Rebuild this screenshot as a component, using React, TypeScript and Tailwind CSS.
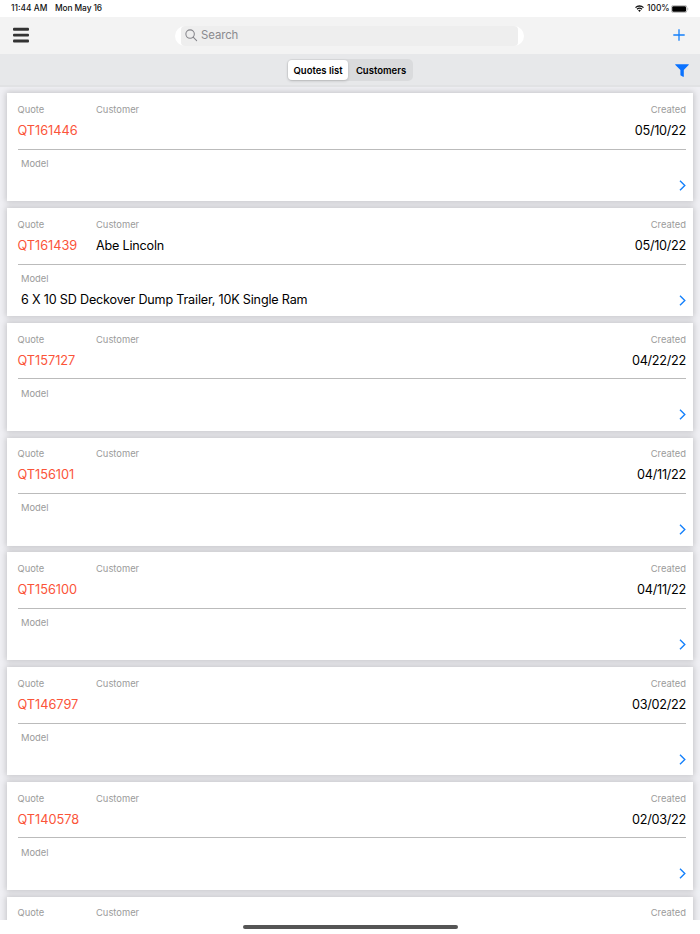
type Quote = {
  id: string;
  created: string;
  customer?: string;
  model?: string;
};

const quotes: Quote[] = [
  { id: "QT161446", created: "05/10/22" },
  { id: "QT161439", created: "05/10/22", customer: "Abe Lincoln", model: "6 X 10 SD Deckover Dump Trailer, 10K Single Ram" },
  { id: "QT157127", created: "04/22/22" },
  { id: "QT156101", created: "04/11/22" },
  { id: "QT156100", created: "04/11/22" },
  { id: "QT146797", created: "03/02/22" },
  { id: "QT140578", created: "02/03/22" },
];

export default function App() {
  return (
    <div className="flex h-[934px] w-[700px] flex-col overflow-hidden bg-white font-['Inter',sans-serif] text-black">
      <StatusBar />
      <NavBar />
      <SegmentBar />
      <main className="flex h-[833px] shrink-0 flex-col gap-[6.75px] overflow-hidden bg-[#efeff3] px-[7px] pt-[6.25px]">
        {quotes.map((q) => <QuoteCard key={q.id} quote={q} />)}
        {/* Next card, only its header row is scrolled into view */}
        <section className="h-[40px] shrink-0 bg-white pr-[7px] pl-[10.5px] shadow-[0_0_6px_1px_rgba(0,0,0,0.18)]">
          <div className="flex pt-[9.75px]">
            <Field className="w-[78.5px]" label="Quote" />
            <Field className="flex-1" label="Customer" />
            <Field className="text-right" label="Created" />
          </div>
        </section>
      </main>
      {/* Home indicator */}
      <div className="flex h-[14px] shrink-0 justify-center pt-[4.5px]">
        <div className="h-[4px] w-[215px] rounded-full bg-[#555]" />
      </div>
    </div>
  );
}

function StatusBar() {
  return (
    <div className="flex h-[17px] shrink-0 items-center justify-between pr-[11px] pl-[11px] text-[8.4px] leading-[17px] font-medium text-[#111]">
      <div className="flex gap-[7.5px]">
        <span className="w-[36.5px] whitespace-nowrap">11:44 AM</span>
        <span className="tracking-[-0.1px] whitespace-nowrap">Mon May 16</span>
      </div>
      <div className="flex items-center gap-[3px]">
        <svg className="h-[7px] w-[9px]" viewBox="0 0 18 14" fill="none" stroke="#111" strokeWidth="2.6">
          <path d="M1 5.2a11.5 11.5 0 0 1 16 0" />
          <path d="M4 8.6a7.2 7.2 0 0 1 10 0" />
          <path d="M6.2 10.7a4 4 0 0 1 5.6 0L9 13.8z" fill="#111" stroke="none" />
        </svg>
        <span className="w-[21px] whitespace-nowrap">100%</span>
        <svg className="h-[8px] w-[18px]" viewBox="0 0 18 8">
          <rect x="0.4" y="0.4" width="15.4" height="7.2" rx="2" fill="#fff" stroke="#aaa" strokeWidth="0.8" />
          <rect x="1.2" y="1.2" width="13.8" height="5.6" rx="1.2" fill="#000" />
          <path d="M16.6 2.7c.9.3.9 2.3 0 2.6z" fill="#999" />
        </svg>
      </div>
    </div>
  );
}

function NavBar() {
  return (
    <header className="flex h-[37px] shrink-0 items-center justify-between bg-[#f3f3f3] pr-[15px] pl-[13px]">
      <button className="w-[162px]">
        <svg className="-mt-[1px] h-[16px] w-[16px]" viewBox="0 0 16 16" fill="#333">
          <rect y="0.8" width="16" height="2.9" rx="1" />
          <rect y="6.7" width="16" height="2.9" rx="1" />
          <rect y="12.6" width="16" height="2.9" rx="1" />
        </svg>
      </button>
      <div className="h-[20px] w-[350px] rounded-[10px] bg-white px-[6px]">
        <div className="flex h-full items-center rounded-[4px] bg-[#eee] pl-[4.5px] text-[11.4px] text-[#8a8a8e]">
          <svg className="mr-[3.5px] size-[12.5px]" viewBox="0 0 13 13" fill="none" stroke="#85858a" strokeWidth="1.1" strokeLinecap="round">
            <circle cx="5.3" cy="5.3" r="4.4" />
            <path d="M8.5 8.5l3.6 3.6" />
          </svg>
          <span className="tracking-[-0.1px]">Search</span>
        </div>
      </div>
      <div className="flex w-[162px] justify-end">
        <svg className="-mt-[1px] size-[12px]" viewBox="0 0 12 12" stroke="#1580fb" strokeWidth="1.3">
          <path d="M6 .3v11.4M.3 6h11.4" />
        </svg>
      </div>
    </header>
  );
}

function SegmentBar() {
  return (
    <div className="flex h-[33px] shrink-0 items-center justify-between border-b-2 border-[#e1e2e4] bg-[#e7e8ea] pr-[11px] pl-[11px]">
      <div className="w-[80px]" />
      <div className="mt-[1px] flex h-[22px] w-[126px] rounded-[5px] bg-[#dadbdd] p-[1px] text-[9.5px] leading-[21px] font-semibold">
        <span className="w-[60px] rounded-[4px] bg-white text-center whitespace-nowrap shadow-[0_1px_3px_rgba(0,0,0,0.18)]">Quotes list</span>
        <span className="w-[64px] pl-[2px] text-center">Customers</span>
      </div>
      <div className="flex w-[80px] justify-end">
        <svg className="mt-[1px] h-[13px] w-[14px]" viewBox="0 0 14 13" fill="#0a72ff">
          <path d="M.6.2h12.8c.5 0 .5.5.2.8L8.8 6v6.5c0 .4-.4.5-.8.3L5.4 11.3V6L.4 1C.1.7.1.2.6.2z" />
        </svg>
      </div>
    </div>
  );
}

function QuoteCard({ quote }: { quote: Quote }) {
  return (
    <section className="h-[108px] shrink-0 bg-white pr-[7px] pl-[10.5px] shadow-[0_0_6px_1px_rgba(0,0,0,0.18)]">
      <div className="flex h-[56.5px] border-b border-[#bbb] pt-[9.75px]">
        <Field className="w-[78.5px]" label="Quote" value={quote.id} valueClass="text-[12.8px] tracking-[-0.05px] text-[#fb5439]" />
        <Field className="flex-1" label="Customer" value={quote.customer} valueClass="text-[12.6px] tracking-[-0.19px]" />
        <Field className="text-right" label="Created" value={quote.created} valueClass="text-[12.7px] tracking-[-0.28px]" />
      </div>
      <div className="flex justify-between pt-[7.25px] pl-[3.5px]">
        <Field label="Model" value={quote.model} valueClass="text-[12.6px] tracking-[-0.18px]" />
        <svg className="mt-[22.75px] h-[11px] w-[7px]" viewBox="0 0 7 11" fill="none" stroke="#1580fb" strokeWidth="1.4">
          <path d="M1 .8l4.8 4.7L1 10.2" />
        </svg>
      </div>
    </section>
  );
}

function Field({ label, value, className = "", valueClass = "" }: { label: string; value?: string; className?: string; valueClass?: string }) {
  return (
    <div className={`whitespace-nowrap ${className}`}>
      <div className="text-[9.4px] leading-[14px] text-[#9b9b9b]">{label}</div>
      {value && <div className={`mt-[5px] leading-[18px] ${valueClass}`}>{value}</div>}
    </div>
  );
}
